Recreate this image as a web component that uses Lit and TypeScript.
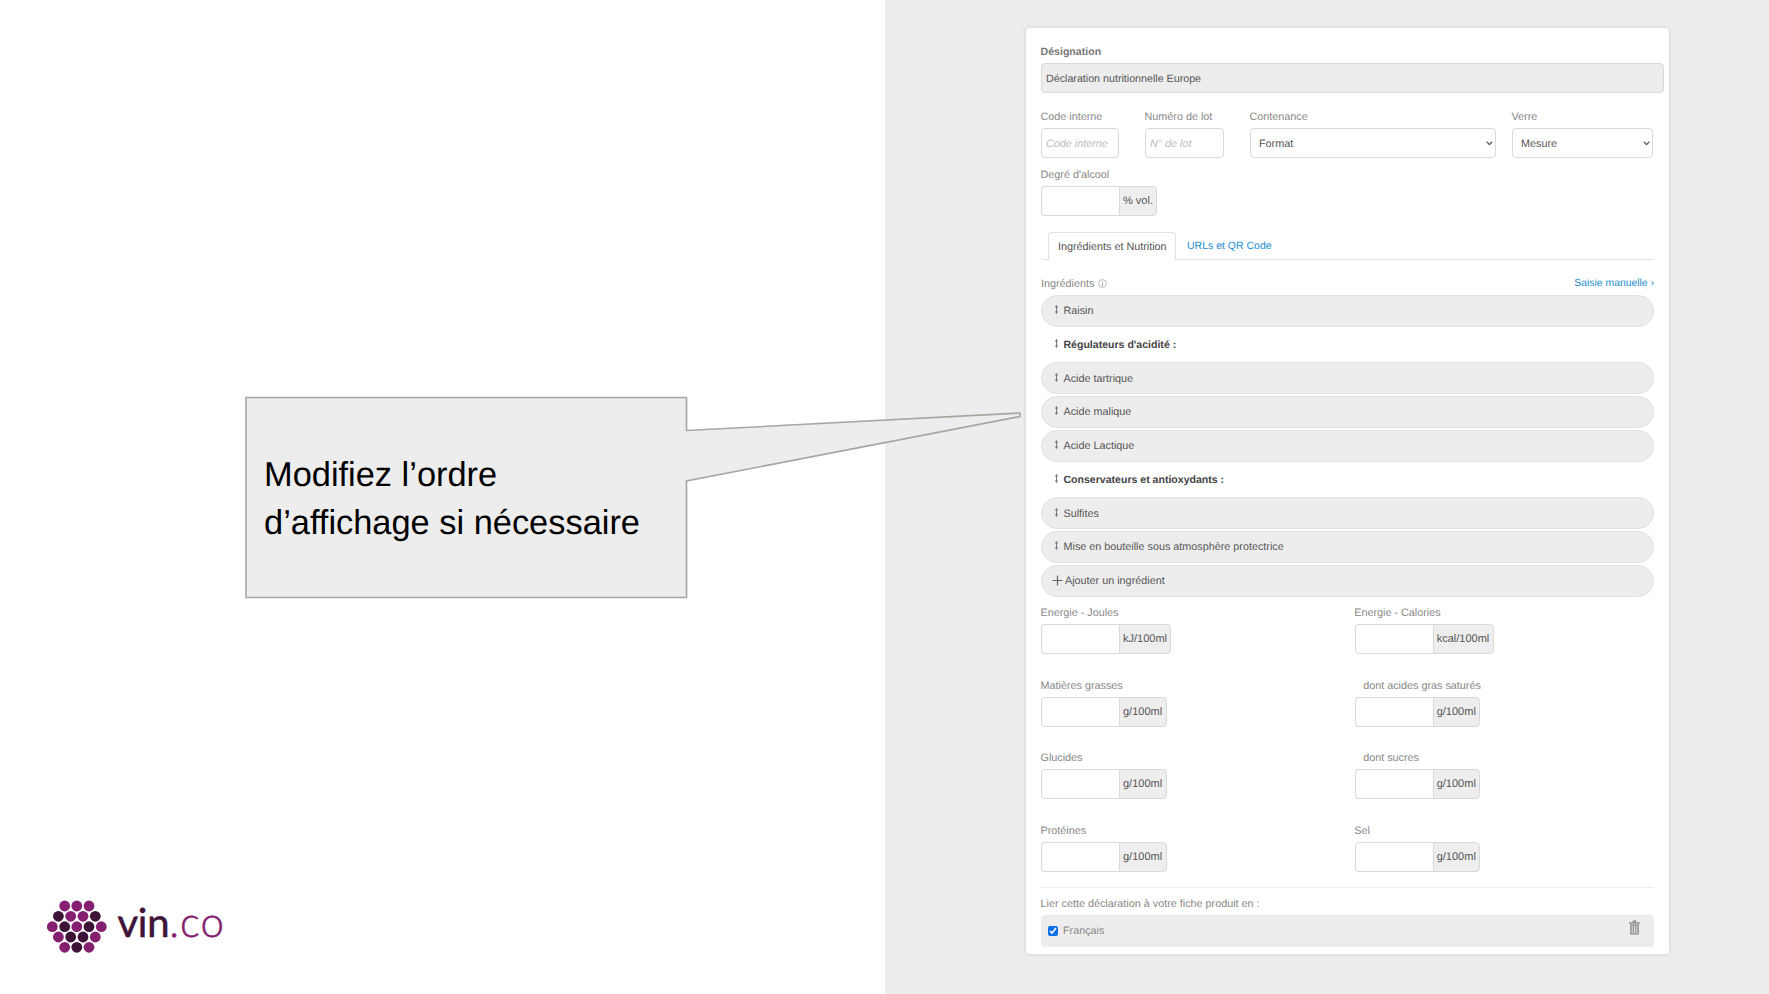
import { LitElement, html, css, svg } from "lit";
import { customElement } from "lit/decorators.js";

const grip = html`<svg class="grip" width="5" height="9" viewBox="0 0 5 9"><path d="M2.5 .5V8.5" stroke="#777" stroke-width="1" fill="none"/><path d="M.7 2.6 2.5 .3 4.3 2.6ZM.7 6.4 2.5 8.7 4.3 6.4Z" fill="#777"/></svg>`;

const D = "#3d1338", P = "#84206f";
const dots: [number, number, string][] = [
  [64.7, 906, P], [76.8, 906, P], [89, 906, P],
  [58.4, 916.3, D], [70.7, 916.3, P], [83, 916.3, P], [95.3, 916.3, D],
  [52.3, 926.7, P], [64.7, 926.7, D], [76.8, 926.7, P], [89, 926.7, D], [101.3, 926.7, P],
  [58.4, 937, P], [70.7, 937, D], [83, 937, D], [95.3, 937, P],
  [64.7, 947.3, P], [76.8, 947.3, D], [89, 947.3, P],
];

@customElement("app-root")
export class AppRoot extends LitElement {
  static styles = css`
    :host { display: block; width: 1769px; height: 994px; position: relative; overflow: hidden; background: #fff; font-family: "Liberation Sans", Arial, sans-serif; font-size: 10.8px; color: #555; text-rendering: geometricPrecision; }
    .page { display: flex; height: 994px; }
    .left { width: 885px; flex: none; display: flex; flex-direction: column; justify-content: flex-end; background: #fff; }
    .logo { display: flex; align-items: flex-start; height: 62px; margin-bottom: 36px; padding-left: 46px; }
    .logo svg { flex: none; }
    .wordmark { margin-left: 9.5px; margin-top: 0; font-family: Lato, sans-serif; font-size: 40px; line-height: 50px; font-weight: 400; color: #3d1338; letter-spacing: -0.3px; -webkit-text-stroke: .6px #3d1338; }
    .wordmark span { color: #84206f; font-size: 42px; font-weight: 300; letter-spacing: 1px; -webkit-text-stroke: .5px #84206f; }
    .right { flex: 1; background: #ededed; padding: 28px 0 0 141px; }
    .card { width: 643px; height: 926px; box-sizing: border-box; background: #fff; border-radius: 3px; box-shadow: 0 0 4px rgba(0,0,0,.14); padding: 15px 5px 0 15px; }
    label, .lab { display: block; height: 16px; line-height: 18px; margin-bottom: 4px; color: #888; white-space: nowrap; text-indent: -.5px; }
    .lab.b { font-weight: bold; font-size: 10.6px; color: #777; }
    .lab.ind { padding-left: 9px; }
    .ctl { box-sizing: border-box; display: block; width: 100%; height: 30px; border: 1px solid #d9d9d9; border-radius: 4px; background-color: #fff; font: 10.8px "Liberation Sans", Arial, sans-serif; text-rendering: geometricPrecision; color: #555; outline: none; margin: 0; padding: 1px 4px 0; }
    .ctl::placeholder { color: #bbb; font-style: italic; opacity: 1; }
    .sel { appearance: none; -webkit-appearance: none; padding: 1px 8px 0; position: relative; }
    .selwrap { position: relative; }
    .chev { position: absolute; right: 3px; top: 13px; pointer-events: none; }
    .ctl.desig { background-color: #ededed; font-size: 10.7px; }
    .line { display: flex; margin-top: 15px; }
    .f1 { width: 78px; margin-right: 26px; }
    .f2 { width: 79px; margin-right: 26px; }
    .f3 { width: 246px; margin-right: 16px; }
    .f4 { width: 141px; }
    .alc { margin-top: 8px; }
    .group { display: flex; height: 30px; }
    .ctl.ginput { width: 78px; flex: none; border-radius: 4px 0 0 4px; border-right: 0; }
    .addon { box-sizing: border-box; height: 30px; font-size: 11px; line-height: 29.5px; padding: 0 3px; background: #eee; border: 1px solid #d9d9d9; border-radius: 0 4px 4px 0; color: #555; white-space: nowrap; }
    .inner { width: 613px; }
    .tabs { display: flex; box-sizing: border-box; height: 28px; margin-top: 16px; padding-left: 7px; border-bottom: 1px solid #e2e2e2; border-bottom-left-radius: 4px; }
    .tab { height: 28px; line-height: 28px; box-sizing: border-box; padding: 0 9px; white-space: nowrap; }
    .tab.on { background: #fff; border: 1px solid #e2e2e2; border-bottom-color: #fff; border-radius: 4px 4px 0 0; width: 128px; color: #555; }
    .tab.link { color: #1b8dce; font-size: 10.5px; padding-left: 11px; line-height: 29px; }
    .head { display: flex; justify-content: space-between; align-items: flex-start; height: 16px; line-height: 18px; margin: 15px 0 3.5px; color: #888; }
    .head a { color: #1b8dce; font-size: 10.4px; }
    .info { vertical-align: -1px; margin-left: 1px; }
    .list { display: flex; flex-direction: column; gap: 1.75px; }
    .row { box-sizing: border-box; height: 32px; display: flex; align-items: center; padding-left: 12px; background: #ededed; border: 1px solid #e1e1e1; border-radius: 16px; color: #555; white-space: nowrap; }
    .row span { position: relative; top: .5px; }
    .row.sec { background: none; border-color: transparent; font-weight: bold; font-size: 10.55px; color: #444; }
    .grip { margin-right: 4.5px; position: relative; top: -1px; flex: none; }
    .row .plus { margin: 0 2px 0 -2px; flex: none; }
    .nutri { display: grid; grid-template-columns: 313.7px 299px; row-gap: 22.7px; margin-top: 7.5px; }
    hr { border: 0; border-top: 1px solid #eee; margin: 15px 0 7px; height: 0; }
    .lang { box-sizing: border-box; height: 31.5px; display: flex; align-items: center; justify-content: space-between; padding: 0 14px 2px 7px; background: #ededed; border-radius: 4px; color: #888; }
    .lang .c { display: flex; align-items: center; margin-top: 2px; }
    .lang input { width: 10px; height: 10px; margin: 0 5px 0 0; accent-color: #0d6fe8; }
    .trash { position: relative; top: -2px; }
    .callout { position: absolute; left: 0; top: 0; pointer-events: none; }
    .ctext { position: absolute; left: 264px; top: 451px; font-size: 34.4px; line-height: 48px; color: #000; white-space: nowrap; }
  `;

  group(unit: string, w: number) {
    return html`<div class="group"><input class="ctl ginput" type="text" /><div class="addon" style="width:${w}px">${unit}</div></div>`;
  }

  nutriField(name: string, unit: string, w: number, ind = false) {
    return html`<div><div class="lab ${ind ? "ind" : ""}">${name}</div>${this.group(unit, w)}</div>`;
  }

  row(t: string, sec = false) {
    return html`<div class="row ${sec ? "sec" : ""}">${grip}<span>${t}</span></div>`;
  }

  sel(t: string) {
    return html`<div class="selwrap"><select class="ctl sel"><option>${t}</option></select><svg class="chev" width="7" height="5" viewBox="0 0 7 5"><path d="M.8 .8 3.5 3.6 6.2 .8" fill="none" stroke="#555" stroke-width="1.3"/></svg></div>`;
  }

  render() {
    return html`
      <div class="page">
        <div class="left">
          <div class="logo">
            <svg width="62" height="62" viewBox="46 896 62 62">
              ${dots.map(([x, y, c]) => svg`<circle cx=${x} cy=${y} r="5.4" fill=${c}></circle>`)}
            </svg>
            <div class="wordmark">vin<span>.co</span></div>
          </div>
        </div>
        <div class="right">
          <div class="card">
            <div class="lab b">Désignation</div>
            <input class="ctl desig" type="text" .value=${"Déclaration nutritionnelle Europe"} />
            <div class="line">
              <div class="f1"><label>Code interne</label><input class="ctl" type="text" placeholder="Code interne" /></div>
              <div class="f2"><label>Numéro de lot</label><input class="ctl" type="text" placeholder="N° de lot" /></div>
              <div class="f3"><label>Contenance</label>${this.sel("Format")}</div>
              <div class="f4"><label>Verre</label>${this.sel("Mesure")}</div>
            </div>
            <div class="alc"><label>Degré d'alcool</label>${this.group("% vol.", 38)}</div>
            <div class="inner">
              <div class="tabs">
                <div class="tab on">Ingrédients et Nutrition</div>
                <div class="tab link">URLs et QR Code</div>
              </div>
              <div class="head">
                <span>Ingrédients <svg class="info" width="9" height="9" viewBox="0 0 9 9"><circle cx="4.5" cy="4.5" r="3.9" fill="none" stroke="#aaa" stroke-width=".8"/><path d="M4.5 3.8V6.8M4.5 2V3" stroke="#999" stroke-width=".9"/></svg></span>
                <a>Saisie manuelle ›</a>
              </div>
              <div class="list">
                ${this.row("Raisin")}
                ${this.row("Régulateurs d'acidité :", true)}
                ${this.row("Acide tartrique")}
                ${this.row("Acide malique")}
                ${this.row("Acide Lactique")}
                ${this.row("Conservateurs et antioxydants :", true)}
                ${this.row("Sulfites")}
                ${this.row("Mise en bouteille sous atmosphère protectrice")}
                <div class="row"><svg class="plus" width="11" height="11" viewBox="0 0 11 11"><path d="M5.5 .5V10.5M.5 5.5H10.5" stroke="#666" stroke-width="1.2"/></svg><span>Ajouter un ingrédient</span></div>
              </div>
              <div class="nutri">
                ${this.nutriField("Energie - Joules", "kJ/100ml", 52)}
                ${this.nutriField("Energie - Calories", "kcal/100ml", 61)}
                ${this.nutriField("Matières grasses", "g/100ml", 48)}
                ${this.nutriField("dont acides gras saturés", "g/100ml", 47, true)}
                ${this.nutriField("Glucides", "g/100ml", 48)}
                ${this.nutriField("dont sucres", "g/100ml", 47, true)}
                ${this.nutriField("Protéines", "g/100ml", 48)}
                ${this.nutriField("Sel", "g/100ml", 47)}
              </div>
              <hr />
              <div class="lab">Lier cette déclaration à votre fiche produit en :</div>
              <div class="lang">
                <div class="c"><input type="checkbox" checked /><span>Français</span></div>
                <svg class="trash" width="11" height="15" viewBox="0 0 11 15"><path d="M0 2.6H11V3.6H0ZM3.8 2.6V1.2Q3.8 .5 4.5 .5H6.5Q7.2 .5 7.2 1.2V2.6" fill="#999" stroke="#999" stroke-width=".5"/><path d="M1 4.3H10V13.6Q10 14.8 8.8 14.8H2.2Q1 14.8 1 13.6Z" fill="#999"/><path d="M3.2 5.5V13.5M5.5 5.5V13.5M7.8 5.5V13.5" stroke="#ededed" stroke-width=".8"/></svg>
              </div>
            </div>
          </div>
        </div>
      </div>
      <svg class="callout" width="1769" height="994" viewBox="0 0 1769 994">
        <path d="M246 397.5H686.5V430.5L1020 413V416.5L686.5 481V597.5H246Z" fill="#ededed" stroke="#a9a5a0" stroke-width="1.6"/>
      </svg>
      <div class="ctext">Modifiez l’ordre<br />d’affichage si nécessaire</div>
    `;
  }
}
